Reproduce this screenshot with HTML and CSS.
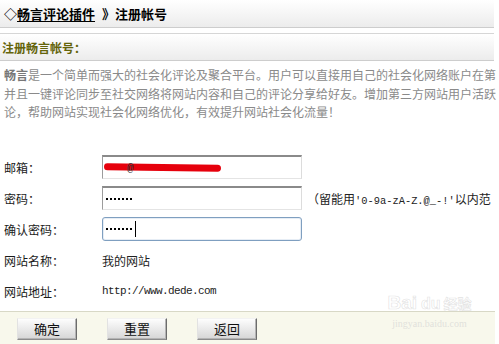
FILE: index.html
```html
<!DOCTYPE html>
<html lang="zh-CN">
<head>
<meta charset="utf-8">
<title>注册畅言帐号</title>
<link rel="stylesheet" href="styles.css">
</head>
<body>
<div class="page">
  <div class="topbar"><span class="diamond">◇</span><span class="crumb">畅言评论插件</span><span class="sep">》</span><span>注册帐号</span></div>
  <div class="titlebar">注册畅言帐号：</div>
  <div class="desc">
    <p><b>畅言</b>是一个简单而强大的社会化评论及聚合平台。用户可以直接用自己的社会化网络账户在第</p>
    <p>并且一键评论同步至社交网络将网站内容和自己的评论分享给好友。增加第三方网站用户活跃</p>
    <p>论，帮助网站实现社会化网络优化，有效提升网站社会化流量！</p>
  </div>
  <div class="form">
    <div class="row"><span class="label">邮箱：</span><div class="field"><span class="scribble"></span><span class="at">@</span></div></div>
    <div class="row"><span class="label">密码：</span><div class="field"><span class="dots"></span></div><span class="hint">（留能用<span class="mono">'0-9a-zA-Z.@_-!'</span>以内范</span></div>
    <div class="row"><span class="label">确认密码：</span><div class="field focus"><span class="dots"></span><span class="caret"></span></div></div>
    <div class="row"><span class="label">网站名称：</span><span class="value">我的网站</span></div>
    <div class="row"><span class="label">网站地址：</span><span class="value url">http://www.dede.com</span></div>
  </div>
  <div class="actions">
    <button class="btn">确定</button>
    <button class="btn">重置</button>
    <button class="btn">返回</button>
  </div>
  <div class="watermark"><span class="wm-logo">Bai<span class="wm-du">du</span><span class="wm-jy">经验</span></span><span class="wm-url">jingyan.baidu.com</span></div>
</div>
</body>
</html>
```

FILE: styles.css
```css
html, body {
  margin: 0;
  padding: 0;
}
body {
  width: 499px;
  height: 344px;
  overflow: hidden;
  background: #fff;
  font-family: "Noto Sans CJK SC", "Liberation Sans", sans-serif;
  font-size: 12px;
  color: #222;
}
.page {
  position: relative;
  width: 499px;
  height: 344px;
  overflow: hidden;
}
.topbar {
  width: 494px;
  height: 28px;
  box-sizing: border-box;
  border-bottom: 1px solid #cdcdcd;
  background: linear-gradient(#ffffff, #ececec);
  display: flex;
  align-items: center;
  padding-left: 4px;
  font-weight: bold;
  font-size: 13px;
  color: #000;
}
.crumb {
  text-decoration: underline;
  text-underline-offset: 2px;
}
.sep {
  margin-left: 7px;
}
.titlebar {
  width: 494px;
  height: 28px;
  box-sizing: border-box;
  margin-top: 5px;
  border-top: 1px solid #d6d6d6;
  border-bottom: 1px solid #cdcdcd;
  background: linear-gradient(#ffffff, #ececec);
  display: flex;
  align-items: center;
  padding-left: 2px;
  font-weight: bold;
  font-size: 12px;
  color: #64640a;
}
.desc {
  padding: 5px 0 0 4px;
  line-height: 18.5px;
  color: #8a8a8a;
  white-space: nowrap;
  overflow: hidden;
}
.desc p {
  margin: 0;
}
.desc b {
  color: #777;
}
.form {
  margin-top: 30px;
}
.row {
  display: flex;
  align-items: center;
  height: 31px;
  white-space: nowrap;
}
.label {
  flex: none;
  width: 102px;
  box-sizing: border-box;
  padding-left: 4px;
  color: #1a1a1a;
}
.field {
  flex: none;
  position: relative;
  width: 200px;
  height: 24px;
  box-sizing: border-box;
  border: 1px solid;
  border-color: #8a8a8a #dcdcdc #e4e4e4 #9c9c9c;
  border-top-width: 2px;
  display: flex;
  align-items: center;
  padding-left: 2px;
  background: #fff;
}
.field.focus {
  border: 1px solid #7f9fc0;
  border-radius: 3px;
  box-shadow: inset 0 0 0 1px #e6edf5;
}
.scribble {
  position: absolute;
  left: 1px;
  top: 7px;
  width: 117px;
  height: 7px;
  background: #e6000c;
  border-radius: 4px;
  transform: rotate(0.8deg);
}
.at {
  position: absolute;
  left: 24px;
  top: 5px;
  font-family: "Liberation Mono", monospace;
  font-size: 11px;
  color: #333;
  line-height: 12px;
}
.dots {
  width: 27px;
  height: 2px;
  margin-left: 1px;
  background: repeating-linear-gradient(90deg, #000 0 2px, transparent 2px 4px);
}
.caret {
  width: 1px;
  height: 16px;
  background: #000;
  margin-left: 2px;
}
.hint {
  margin-left: 5px;
  color: #222;
}
.mono {
  font-family: "Liberation Mono", monospace;
  font-size: 10.4px;
}
.value {
  color: #222;
}
.url {
  font-family: "Liberation Mono", monospace;
  font-size: 11px;
  letter-spacing: -0.6px;
}
.actions {
  margin-top: 4px;
  width: 495px;
  height: 33px;
  box-sizing: border-box;
  border-top: 1px solid #d8d8c6;
  background: #f8f8ec;
  display: flex;
  gap: 30px;
  padding: 6px 0 0 17px;
}
.btn {
  width: 60px;
  height: 22px;
  padding: 0;
  font-family: "Noto Sans CJK SC", sans-serif;
  font-size: 13px;
  color: #111;
  background: linear-gradient(#fdfdfd, #d6d6d6);
  border: 1px solid;
  border-color: #f2f2f2 #6c6c6c #8c8c8c #e2e2e2;
  box-shadow: inset -1px -1px 0 #b4b4b4;
  line-height: 20px;
}
.watermark {
  position: absolute;
  left: 382px;
  top: 288px;
  width: 95px;
  display: flex;
  flex-direction: column;
  align-items: center;
  color: rgba(210, 210, 210, 0.55);
  pointer-events: none;
}
.wm-logo {
  font-family: "Liberation Sans", sans-serif;
  font-weight: bold;
  font-size: 19px;
  line-height: 30px;
  -webkit-text-stroke: 0.6px rgba(200, 200, 200, 0.55);
  color: rgba(255, 255, 255, 0.6);
}
.wm-du {
  margin-left: 4px;
  font-size: 16px;
}
.wm-jy {
  margin-left: 3px;
  font-family: "Noto Sans CJK SC", sans-serif;
  font-size: 14px;
}
.wm-url {
  font-family: "Liberation Serif", serif;
  font-size: 10px;
  line-height: 10px;
  color: rgba(205, 205, 205, 0.55);
}
```
